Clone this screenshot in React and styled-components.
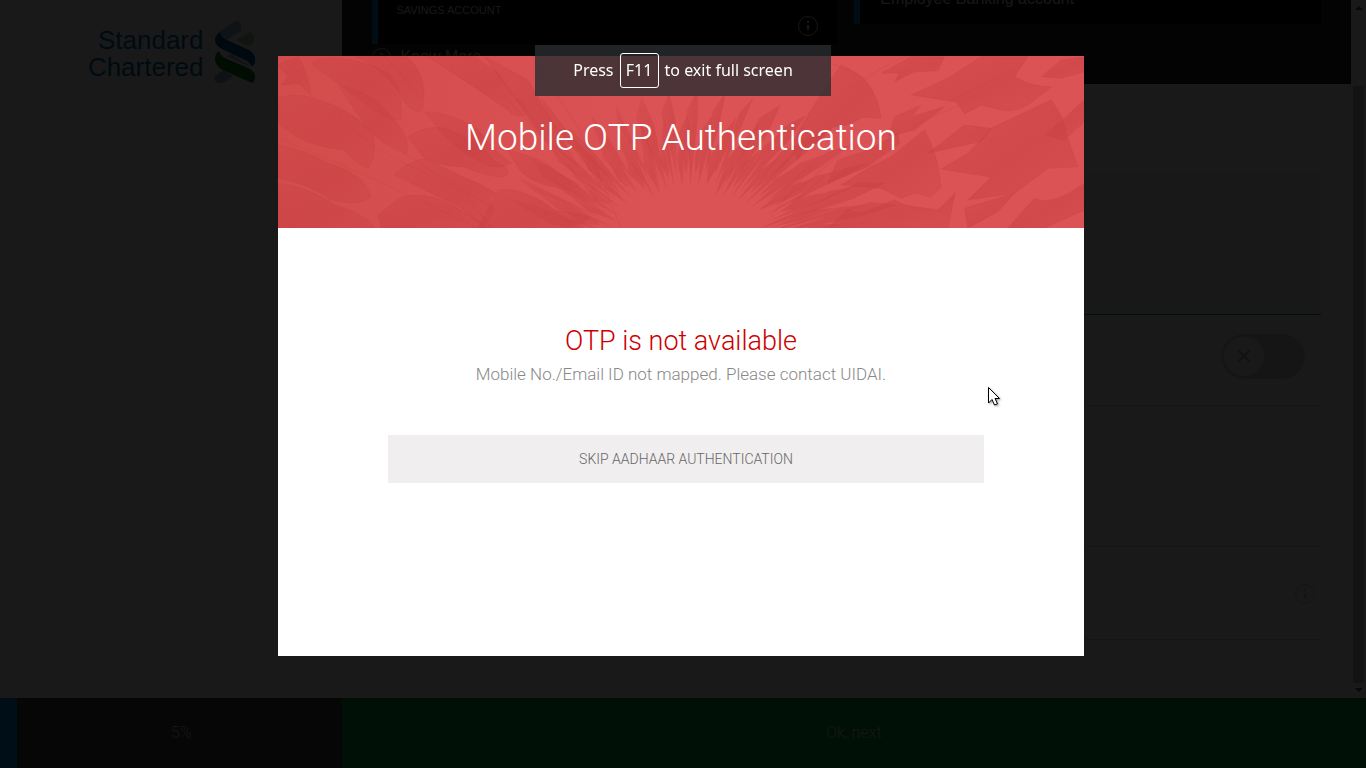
import React from "react";
import styled, { createGlobalStyle } from "styled-components";

const GlobalStyle = createGlobalStyle`
  *, *::before, *::after { box-sizing: border-box; }
  html, body, #root { height: 100%; }
  body {
    margin: 0;
    overflow: hidden;
    font-family: Roboto, "Liberation Sans", sans-serif;
    font-weight: 300;
    background: #fff;
  }
  h1, h2, p { margin: 0; font-weight: 300; }
  button { font-family: inherit; font-weight: inherit; border: 0; cursor: pointer; }
`;

const Page = styled.div`
  height: 100vh;
  display: flex;
  flex-direction: column;
`;

const Body = styled.div`
  flex: 1;
  min-height: 0;
  display: flex;
`;

const Sidebar = styled.aside`
  width: 25%;
  padding: 20px 86px;
  display: flex;
  justify-content: flex-end;
  align-items: flex-start;
`;

const Brand = styled.a`
  display: flex;
  gap: 10px;
  color: #0070a8;
  text-decoration: none;
  font: 400 26px/27px "Liberation Sans", sans-serif;
  text-align: right;
`;

const BrandName = styled.span`
  padding-top: 7px;
  white-space: nowrap;
`;

const Main = styled.main`
  flex: 1;
  min-width: 0;
  overflow: hidden;
`;

const Products = styled.section`
  height: 124px;
  margin-top: -40px;
  padding: 0 30px;
  background: #1e1e1e;
  display: grid;
  grid-template-columns: 1fr 1fr;
  gap: 16px;
  align-items: start;
  color: #e0e0e0;
`;

const ProductCard = styled.article`
  height: ${(p) => (p.$tall ? "84px" : "64px")};
  border-left: 6px solid #0088cc;
  background: #000;
  padding: ${(p) => (p.$tall ? "43px 20px 0 19px" : "28px 20px 0")};
  display: flex;
  justify-content: space-between;
  font-size: ${(p) => (p.$tall ? "11px" : "16px")};
  line-height: ${(p) => (p.$tall ? "14px" : "22px")};
  font-family: "Liberation Sans", sans-serif;
  font-weight: 400;
`;

const CardIcon = styled.span`
  padding-top: 13px;
  svg { display: block; }
`;

const KnowMore = styled.a`
  display: flex;
  align-items: center;
  gap: 10px;
  color: #d0d0d0;
  font: 400 16px/26px "Liberation Sans", sans-serif;
  text-decoration: none;
`;

const Form = styled.section`
  padding: 90px 30px 0;
`;

const Field = styled.div`
  height: ${(p) => p.$height};
  border-bottom: 1px solid ${(p) => (p.$active ? "#0088cc" : "#d4d4d4")};
  background: ${(p) => (p.$active ? "#f0f0ff" : "transparent")};
  padding: ${(p) => (p.$icon ? "2px 6px 0 0" : "0 16px 8px 0")};
  display: flex;
  justify-content: flex-end;
  align-items: center;
  color: #c8c8c8;
`;

const Toggle = styled.button`
  width: 84px;
  height: 45px;
  padding: 3px;
  border-radius: 23px;
  background: #d8d8d8;
`;

const Knob = styled.span`
  width: 40px;
  height: 39px;
  border-radius: 50%;
  background: #fff;
  display: flex;
  align-items: center;
  justify-content: center;
`;

const ScrollTrack = styled.div`
  width: 15px;
  padding: 4px 2px;
  display: flex;
  flex-direction: column;
  align-items: center;
  gap: 3px;
  background: #fafafa;
  svg { width: 8px; height: 8px; flex: none; }
`;

const ScrollThumb = styled.div`
  flex: 1;
  width: 11px;
  margin: 71px 0 0;
  background: #bdbdbd;
`;

const Footer = styled.footer`
  height: 70px;
  display: flex;
  font-size: 16px;
  color: #ddd;
`;

const Progress = styled.div`
  width: 25%;
  padding: 0 0 2px 21px;
  display: flex;
  align-items: center;
  justify-content: center;
  background: linear-gradient(to right, #0098e8 5%, #3c3c3c 5%);
`;

const NextButton = styled.button`
  flex: 1;
  padding: 0 0 2px;
  background: #00a040;
  color: #ddd;
  font-size: 16px;
`;

const Overlay = styled.div`
  position: fixed;
  inset: 0;
  padding: 56px 4px 112px 0;
  display: flex;
  justify-content: center;
  background: rgba(0, 0, 0, 0.9);
`;

const Modal = styled.div`
  width: 59.2%;
  display: flex;
  flex-direction: column;
  background: #fff;
`;

const Banner = styled.header`
  position: relative;
  height: 172px;
  padding-bottom: 8px;
  display: flex;
  align-items: center;
  justify-content: center;
  background: #db5354;
  color: #fff;
`;

const Petals = styled.svg`
  position: absolute;
  inset: 0;
  width: 100%;
  height: 100%;
`;

const Title = styled.h1`
  position: relative;
  font-size: 37px;
  line-height: 48px;
`;

const ModalBody = styled.div`
  padding: 94px 100px 0 110px;
  display: flex;
  flex-direction: column;
  text-align: center;
`;

const Message = styled.div`
  padding-right: 10px;
`;

const Warning = styled.h2`
  font-size: 27px;
  line-height: 38px;
  color: #c00;
`;

const Detail = styled.p`
  font-size: 17px;
  line-height: 28px;
  color: #888;
`;

const SkipButton = styled.button`
  height: 48px;
  margin-top: 47px;
  background: #f0eeef;
  color: #666;
  font-size: 14px;
  text-transform: uppercase;
`;

const Toast = styled.div`
  position: fixed;
  top: 45px;
  left: 50%;
  transform: translateX(-50%);
  width: 296px;
  height: 51px;
  display: flex;
  align-items: center;
  justify-content: center;
  gap: 6px;
  background: rgba(40, 45, 49, 0.8);
  color: #fff;
  font: 400 16px/20px "Noto Sans", sans-serif;
  white-space: nowrap;
`;

const ToastText = styled.span`
  padding-bottom: 2px;
`;

const Key = styled.kbd`
  width: 39px;
  height: 35px;
  padding-bottom: 2px;
  border: 1px solid #fff;
  border-radius: 3px;
  display: flex;
  align-items: center;
  justify-content: center;
  font: inherit;
`;

const Pointer = styled.svg`
  position: fixed;
  left: 987px;
  top: 386px;
  width: 14px;
  height: 21px;
  filter: drop-shadow(1px 1px 1px rgba(0, 0, 0, 0.4));
`;

const leftPetals = [
  "M0 45 L30 80 L10 105 L62 100 L98 132 Q90 70 62 22 L20 34Z",
  "M100 40 Q130 20 190 25 Q270 35 330 70 Q375 110 370 205 Q350 220 300 188 Q240 150 180 100 Q150 80 100 40Z",
  "M0 145 Q50 125 120 150 Q230 180 285 255 Q300 310 270 355 Q230 340 200 300 Q110 290 60 262 L0 220Z",
  "M180 105 Q290 130 340 200 Q400 260 385 312 Q300 280 260 225Z",
  "M0 285 Q80 300 150 340 Q260 370 278 440 Q250 470 160 450 Q90 400 0 385Z",
  "M0 400 Q90 410 170 465 Q260 490 290 534 L0 534Z",
  "M390 262 Q440 225 500 235 Q600 270 645 330 L680 350 Q705 370 670 382 Q610 375 560 350 Q470 350 430 315Z",
  "M350 372 Q390 335 440 325 Q540 375 600 400 L655 430 Q620 450 650 475 L615 534 Q570 480 520 460 L350 375Z",
  "M300 495 L370 440 Q450 425 510 460 Q590 500 625 534 L310 534Z",
  "M230 20 L385 20 Q450 70 435 170 Q420 205 380 155 Q330 60 230 20Z",
  "M450 20 L610 125 L690 180 Q720 210 745 190 Q750 150 710 145 L660 70 L590 20Z",
  "M440 185 Q530 190 600 240 L650 300 L700 340 Q640 365 590 325 Q520 290 440 185Z",
  "M690 302 Q780 315 850 375 L905 405 Q880 430 835 412 Q760 400 725 360Z",
  "M660 420 Q740 410 830 480 L935 500 Q900 534 840 534 L600 534Z",
  "M620 20 L750 90 L830 230 L900 350 L790 260 L730 170Z",
  "M790 145 L880 260 L960 340 L970 410 L900 310 L820 220Z",
];

const rightPetals = [
  "M330 285 Q390 170 480 45 Q530 65 560 100 Q595 150 600 205 L545 202 L500 225 L455 232 L410 280 L370 290 L350 330Z",
  "M480 405 L560 355 L630 320 L730 240 Q770 310 780 410 L750 440 L700 430 L660 445 L600 415Z",
  "M690 135 L800 85 L900 20 L1040 20 L1000 80 Q1050 110 1110 110 L1060 150 Q1010 190 960 180 L900 165 L850 192 L825 155Z",
  "M930 235 L1110 150 Q1150 200 1160 265 L1190 350 L1100 355 L1000 430 L860 450 L930 382 L780 357 L860 310 L890 280Z",
  "M740 310 L850 225 L930 235 L900 275 L820 292Z",
  "M600 70 L690 20 L790 20 L770 62 L700 65 L640 95 L655 68Z",
  "M980 534 L1060 445 Q1110 470 1209 400 L1209 480 L1090 534Z",
  "M440 534 L500 480 L540 490 L640 450 L670 465 L770 480 L822 430 L800 534Z",
  "M1095 255 L1209 150 L1209 215 L1150 270Z",
  "M850 475 L1000 430 L950 485 L860 534Z",
  "M1080 80 L1140 30 L1209 20 L1209 65 L1140 85Z",
  "M470 330 L560 300 L650 250 L655 280 L560 350 L440 400Z",
  "M640 200 L720 165 L690 200 L790 170 L700 240 L620 260Z",
];

const creases = [
  "M0 265 L180 340 L380 430 L600 534",
  "M180 200 L300 300 L560 430 L640 534",
  "M320 20 Q380 80 430 150 M380 310 L520 400 L640 470",
  "M760 20 L900 230 L1030 534 M690 150 L900 380",
  "M1640 30 L1770 90 M1690 130 L1800 60 L1880 20 M1900 230 L2120 130",
  "M1560 420 L1700 300 L1860 240 M2000 160 L2209 60",
  "M1530 470 L1640 380 M1480 500 L1600 350",
];

/* Narrow florets that radiate from the flower's centre below the banner. */
const florets = Array.from({ length: 58 }, (_, i) => {
  const angle = (-164 + i * 2.6) * (Math.PI / 180);
  const inner = 190 + ((i * 37) % 70);
  const outer = 330 + ((i * 71) % 210);
  const spread = 0.02 + ((i * 13) % 5) * 0.006;
  const at = (r, a) =>
    `${(1230 + r * 1.25 * Math.cos(a)).toFixed(0)} ${(620 + r * Math.sin(a)).toFixed(0)}`;
  return `M${at(inner, angle)} L${at(outer - 60, angle - spread)} L${at(outer, angle + 0.02)} L${at(outer - 90, angle + spread)}Z`;
});

const BannerArt = () => (
  <Petals viewBox="0 0 806 172" preserveAspectRatio="xMidYMid slice" aria-hidden="true">
    <defs>
      <linearGradient id="shade" x1="0" x2="1">
        <stop offset="0" stopColor="#cc4545" stopOpacity=".5" />
        <stop offset=".5" stopColor="#cc4545" stopOpacity="0" />
      </linearGradient>
      <linearGradient id="petal" x1="0" y1="0" x2="1" y2="1">
        <stop offset="0" stopColor="#c94142" stopOpacity=".3" />
        <stop offset=".55" stopColor="#c94142" stopOpacity=".55" />
        <stop offset="1" stopColor="#c94142" stopOpacity=".3" />
      </linearGradient>
    </defs>
    <rect width="806" height="172" fill="url(#shade)" />
    <g transform="scale(.3333) translate(0 -18)" fill="url(#petal)" stroke="#c33f40" strokeOpacity=".2" strokeWidth="3">
      {leftPetals.map((d) => <path key={d} d={d} />)}
      {florets.map((d) => <path key={d} d={d} stroke="none" />)}
      {creases.map((d) => <path key={d} d={d} fill="none" />)}
      <g transform="translate(1209 0)">
        {rightPetals.map((d) => <path key={d} d={d} />)}
      </g>
    </g>
  </Petals>
);

const BrandMark = () => (
  <svg width="42" height="64" viewBox="0 0 42 64" aria-hidden="true">
    <path d="M5 12 L21 1 Q27 0 27 6 L27 11 L11 21 Q4 18 5 12Z" fill="#7fa6cc" opacity=".75" />
    <path d="M22 20 L36 12 Q40 13 40 19 Q40 25 33 26Z" fill="#7fa67f" opacity=".6" />
    <path d="M18 34 L28 41 Q35 44 35 46 L23 41 L12 36Z" fill="#7fa6cc" opacity=".7" />
    <path d="M0 57 L9 50 L19 56 L13 61 Q6 65 1 61Z" fill="#6f9cc8" opacity=".75" />
    <path d="M6 12 Q6 17 13 20 L35 30 Q42 34 41 41 Q41 46 37 46 Q36 42 29 39 L10 30 Q1 26 1 20 Q1 15 6 12Z" fill="#005f9e" />
    <path d="M5 31 Q6 36 13 39 L34 48 Q41 51 41 57 Q41 62 38 63 L9 50 Q1 46 1 39 Q1 33 5 31Z" fill="#0f7a18" />
  </svg>
);

const InfoIcon = ({ size = 20 }) => (
  <svg width={size} height={size} viewBox="0 0 20 20" fill="none" stroke="currentColor" aria-hidden="true">
    <circle cx="10" cy="10" r="9.5" />
    <path d="M10 5v2M10 9v5" strokeWidth="2" />
  </svg>
);

export default function App() {
  return (
    <>
      <GlobalStyle />
      <Page>
        <Body>
          <Sidebar>
            <Brand href="#home">
              <BrandName>Standard<br />Chartered</BrandName>
              <BrandMark />
            </Brand>
          </Sidebar>
          <Main>
            <Products>
              <div>
                <ProductCard $tall>
                  <span>SAVINGS ACCOUNT</span>
                  <CardIcon><InfoIcon /></CardIcon>
                </ProductCard>
                <KnowMore href="#more"><InfoIcon size={19} />Know More</KnowMore>
              </div>
              <ProductCard>
                <span>Employee Banking account</span>
              </ProductCard>
            </Products>
            <Form>
              <Field $active $height="141px" />
              <Field $height="91px">
                <Toggle type="button" role="switch" aria-checked="false" aria-label="Option">
                  <Knob>
                    <svg width="14" height="14" viewBox="0 0 14 14" stroke="#aaa" strokeWidth="2" aria-hidden="true">
                      <path d="M1 1l12 12M13 1L1 13" />
                    </svg>
                  </Knob>
                </Toggle>
              </Field>
              <Field $height="141px" />
              <Field $height="93px" $icon><InfoIcon /></Field>
            </Form>
          </Main>
          <ScrollTrack aria-hidden="true">
            <svg viewBox="0 0 8 8"><path d="M0 6L4 2l4 4z" fill="#555" /></svg>
            <ScrollThumb />
            <svg viewBox="0 0 8 8"><path d="M0 2l4 4 4-4z" fill="#555" /></svg>
          </ScrollTrack>
        </Body>
        <Footer>
          <Progress>5%</Progress>
          <NextButton type="button">Ok, next</NextButton>
        </Footer>
      </Page>
      <Overlay>
        <Modal role="dialog" aria-modal="true" aria-labelledby="otp-title">
          <Banner>
            <BannerArt />
            <Title id="otp-title">Mobile OTP Authentication</Title>
          </Banner>
          <ModalBody>
            <Message>
              <Warning>OTP is not available</Warning>
              <Detail>Mobile No./Email ID not mapped. Please contact UIDAI.</Detail>
            </Message>
            <SkipButton type="button">Skip Aadhaar Authentication</SkipButton>
          </ModalBody>
        </Modal>
      </Overlay>
      <Toast role="status">
        <ToastText>Press</ToastText>
        <Key>F11</Key>
        <ToastText>to exit full screen</ToastText>
      </Toast>
      <Pointer viewBox="0 0 14 21" aria-hidden="true">
        <path d="M1.500 1.500V17l3.500-3.500L7.500 19l3-1.200L8 12.500h4.500z" fill="#fff" stroke="#000" />
      </Pointer>
    </>
  );
}
